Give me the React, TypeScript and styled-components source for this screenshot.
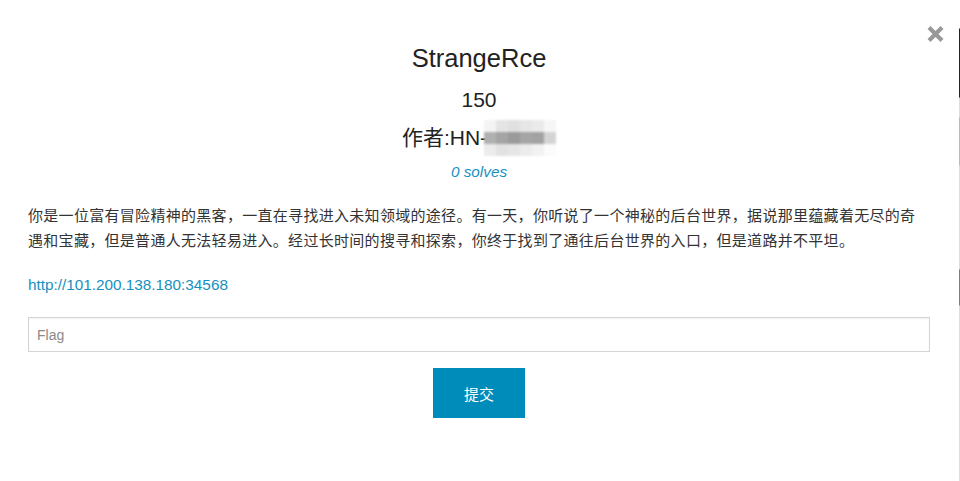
import React from "react";
import styled, { createGlobalStyle } from "styled-components";

const Global = createGlobalStyle`
  html, body { margin: 0; padding: 0; background: #fff; }
  body { font-family: "Liberation Sans", Arial, "Noto Sans CJK SC", sans-serif; color: #222; }
  * { box-sizing: border-box; }
`;

const Page = styled.div`
  display: flex;
  width: 960px;
  height: 481px;
  overflow: hidden;
`;

const Modal = styled.div`
  flex: 1;
  position: relative;
  background: #fff;
  padding: 43px 29px 0 28px;
  display: flex;
  flex-direction: column;
`;

const Edge = styled.div`
  width: 1px;
  background: linear-gradient(
    to bottom,
    #fff 0px, #fff 28px,
    #222 29px, #222 97px,
    #ddd 98px, #ddd 117px,
    #9fd47f 118px, #9fd47f 165px,
    #ddd 166px, #ddd 269px,
    #8b6bbf 270px, #8b6bbf 305px,
    #ddd 306px, #ddd 481px
  );
`;

const Close = styled.button`
  position: absolute;
  top: 25px;
  right: 14px;
  width: 19px;
  height: 18px;
  padding: 0;
  border: 0;
  background: transparent;
  cursor: pointer;
  display: flex;
`;

const Header = styled.div`
  display: flex;
  flex-direction: column;
  align-items: center;
  text-align: center;
`;

const Title = styled.h3`
  margin: 0;
  font-size: 25.5px;
  line-height: 30px;
  font-weight: 400;
  color: #222;
`;

const Points = styled.h4`
  margin: 14px 0 0;
  font-size: 21px;
  line-height: 25px;
  font-weight: 400;
  color: #222;
`;

const Author = styled.h4`
  margin: 13px 0 0;
  height: 25px;
  font-size: 21px;
  line-height: 25px;
  font-weight: 400;
  color: #222;
  display: flex;
  align-items: center;
  font-family: "Liberation Sans", Arial, "Noto Sans CJK SC", sans-serif;
`;

const Mosaic = styled.span`
  display: grid;
  grid-template-columns: repeat(6, 12px);
  grid-template-rows: repeat(3, 12px);
  margin: -10px 0 -10px -3px;
  filter: blur(1px);
`;

const Cell = styled.span<{ $c: string }>`
  background: ${(p) => p.$c};
`;

const Solves = styled.span`
  margin-top: 13px;
  font-size: 15.3px;
  line-height: 18px;
  font-style: italic;
  color: #1790c0;
`;

const Description = styled.p`
  margin: 22px 0 0;
  font-size: 15px;
  letter-spacing: 0.3px;
  line-height: 25px;
  color: #333;
  font-family: "Liberation Sans", Arial, "Noto Sans CJK SC", sans-serif;
`;

const Link = styled.a`
  margin-top: 19px;
  font-size: 15.3px;
  line-height: 25px;
  color: #1790c0;
  text-decoration: none;
  align-self: flex-start;
`;

const Input = styled.input`
  margin-top: 20px;
  width: 100%;
  height: 35px;
  border: 1px solid #d4d4d4;
  box-shadow: inset 0 1px 2px rgba(0, 0, 0, 0.06);
  padding: 0 8px;
  font-size: 14px;
  font-family: "Liberation Sans", Arial, sans-serif;
  color: #333;
  outline: none;
  &::placeholder { color: #8a8a8a; }
`;

const Actions = styled.div`
  display: flex;
  justify-content: center;
  margin-top: 16px;
`;

const Submit = styled.button`
  width: 92px;
  height: 50px;
  border: 0;
  background: #008cba;
  color: #fff;
  font-size: 15px;
  font-family: "Liberation Sans", Arial, "Noto Sans CJK SC", sans-serif;
  cursor: pointer;
`;

const mosaic = [
  "#f4f4f4", "#e4e4e4", "#e0e0e0", "#e6e6e6", "#eaeaea", "#f6f6f6",
  "#b0b0b0", "#a4a4a4", "#9a9a9a", "#a6a6a6", "#a2a2a2", "#d4d4d4",
  "#ececec", "#e2e2e2", "#e6e6e6", "#ececec", "#f2f2f2", "#fbfbfb",
];

export default function App() {
  return (
    <Page>
      <Global />
      <Modal>
        <Close aria-label="close">
          <svg width="19" height="18" viewBox="0 0 19 18">
            <path d="M3 2.5 L16 15.5 M16 2.5 L3 15.5" stroke="#999" strokeWidth="4.2" strokeLinecap="butt" />
          </svg>
        </Close>
        <Header>
          <Title>StrangeRce</Title>
          <Points>150</Points>
          <Author>
            作者:HN-
            <Mosaic>
              {mosaic.map((c, i) => (
                <Cell key={i} $c={c} />
              ))}
            </Mosaic>
          </Author>
          <Solves>0 solves</Solves>
        </Header>
        <Description>
          你是一位富有冒险精神的黑客，一直在寻找进入未知领域的途径。有一天，你听说了一个神秘的后台世界，据说那里蕴藏着无尽的奇遇和宝藏，但是普通人无法轻易进入。经过长时间的搜寻和探索，你终于找到了通往后台世界的入口，但是道路并不平坦。
        </Description>
        <Link href="#">http://101.200.138.180:34568</Link>
        <Input placeholder="Flag" />
        <Actions>
          <Submit>提交</Submit>
        </Actions>
      </Modal>
      <Edge />
    </Page>
  );
}
